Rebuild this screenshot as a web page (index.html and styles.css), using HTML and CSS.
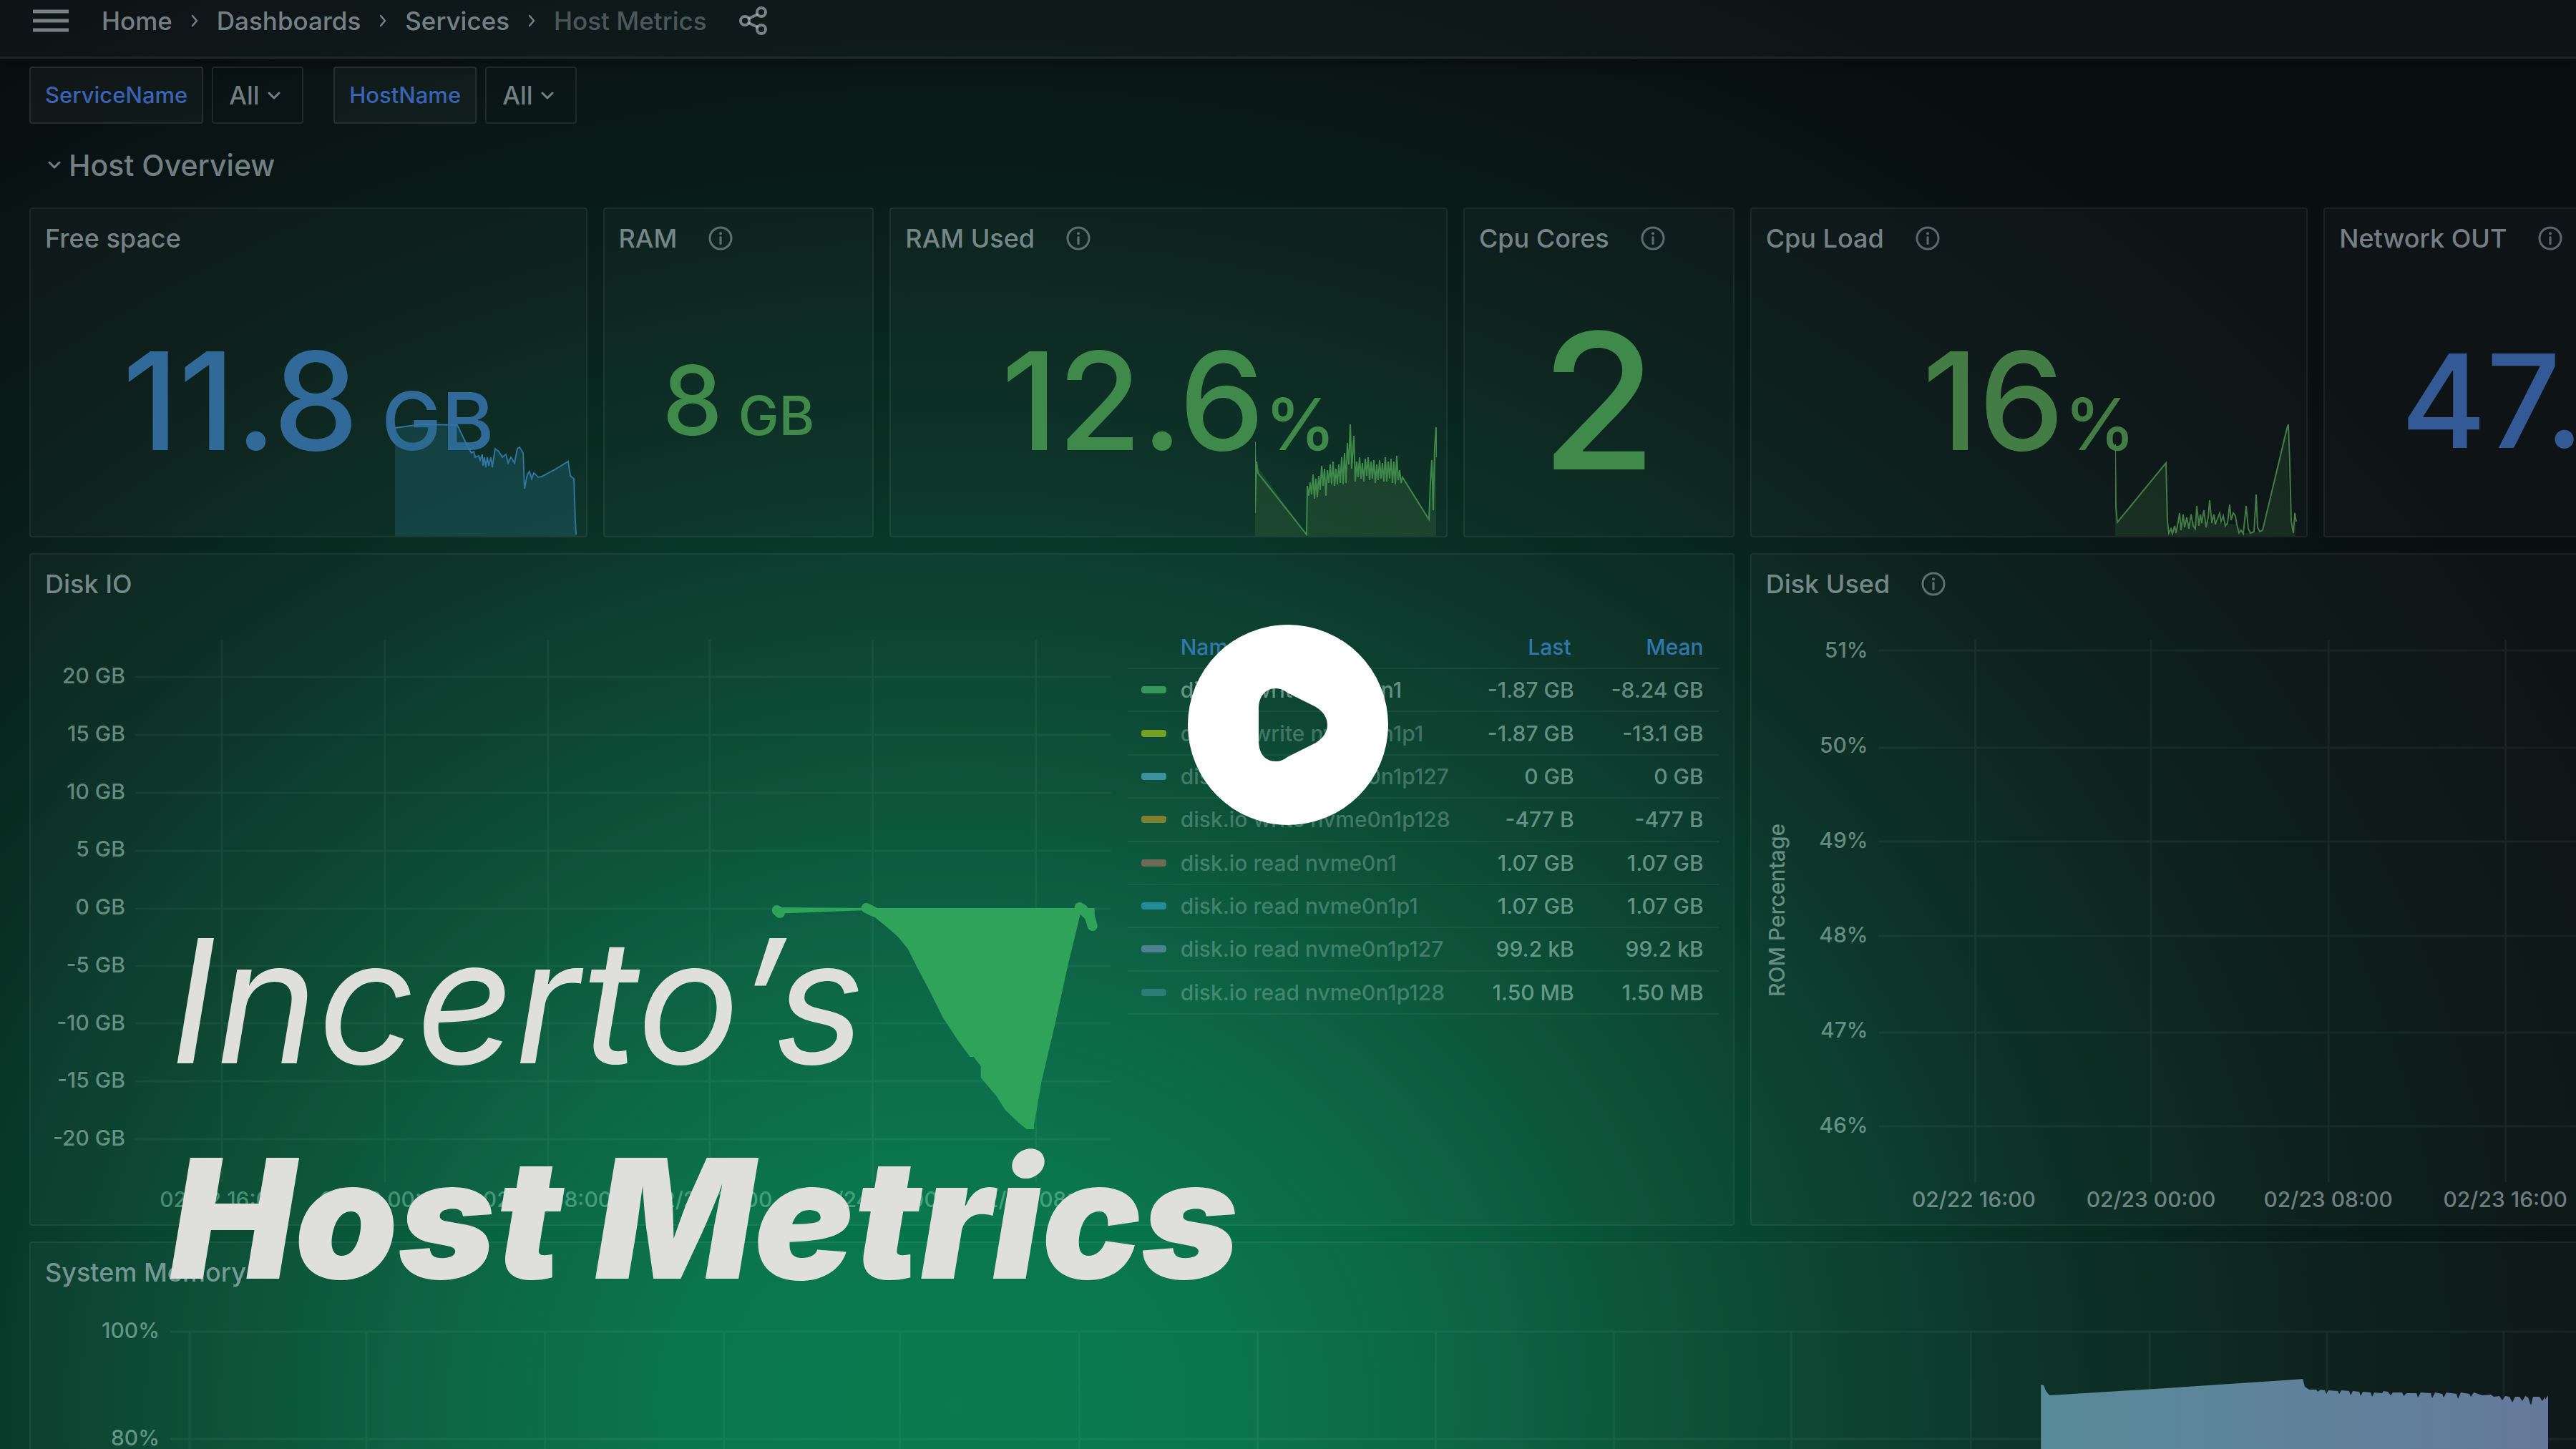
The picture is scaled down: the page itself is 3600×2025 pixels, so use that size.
FILE: index.html
```html
<!DOCTYPE html>
<html lang="en">
<head>
<meta charset="utf-8">
<title>Host Metrics</title>
<link rel="stylesheet" href="styles.css">
</head>
<body>
<svg width="0" height="0" class="defs" aria-hidden="true">
  <symbol id="info" viewBox="0 0 34 34"><circle cx="17" cy="17" r="15" fill="none" stroke="currentColor" stroke-width="3"/><path d="M17 15.500v9" stroke="currentColor" stroke-width="3.200" stroke-linecap="round"/><circle cx="17" cy="10.300" r="2" fill="currentColor"/></symbol>
  <symbol id="down" viewBox="0 0 18 12"><path d="M2 2l7 7 7-7" fill="none" stroke="currentColor" stroke-width="3" stroke-linecap="round" stroke-linejoin="round"/></symbol>
  <symbol id="next" viewBox="0 0 12 20"><path d="M3 3l6 7-6 7" fill="none" stroke="currentColor" stroke-width="2.500" stroke-linecap="round" stroke-linejoin="round"/></symbol>
</svg>

<header class="topbar">
  <button class="icon-button menu" aria-label="Menu"><svg viewBox="0 0 50 32"><path d="M0 3h50M0 16h50M0 29h50" stroke="currentColor" stroke-width="5"/></svg></button>
  <nav class="crumbs">
    <a href="#">Home</a><svg><use href="#next"/></svg>
    <a href="#">Dashboards</a><svg><use href="#next"/></svg>
    <a href="#">Services</a><svg><use href="#next"/></svg>
    <span class="current">Host Metrics</span>
  </nav>
  <button class="icon-button share" aria-label="Share"><svg viewBox="0 0 40 40" fill="none" stroke="currentColor" stroke-width="4"><circle cx="8" cy="20" r="6"/><circle cx="31" cy="8" r="6"/><circle cx="31" cy="32" r="6"/><path d="M13 17l13-6M13 23l13 6"/></svg></button>
</header>

<main>
  <div class="variables">
    <div class="variable">
      <label for="service">ServiceName</label>
      <span class="picker"><select id="service"><option>All</option></select><svg><use href="#down"/></svg></span>
    </div>
    <div class="variable">
      <label for="host">HostName</label>
      <span class="picker"><select id="host"><option>All</option></select><svg><use href="#down"/></svg></span>
    </div>
  </div>

  <h2 class="row-title"><svg><use href="#down"/></svg>Host Overview</h2>

  <div class="dashboard">
    <section class="panel stat span-2 blue">
      <h3>Free space</h3>
      <p class="value">11.8<span class="unit spaced">GB</span></p>
      <svg class="spark" viewBox="0 0 254 160">
        <path class="fill" d="M0 9L22 6 38 4 87 5 103 38 107 42 112 46 119 50 123 58 137 60 140 38 150 46 158 52 167 56 171 38 177 42 181 94 185 74 191 72 197 78 205 77 222 68 242 56 246 76 250 80 252 140 254 160H0z"/>
        <path class="line" d="M0 9L22 6 38 4 87 5 103 38 107 44 110 42 112 50 117 48 119 54 122 46 123 62 125 50 127 64 129 50 131 62 134 50 136 64 140 38 145 42 150 50 155 46 158 58 162 50 167 58 171 38 174 36 179 44 181 94 185 74 188 70 191 80 194 72 200 78 205 77 222 68 242 56 245 76 250 80 252 140 253 158"/>
      </svg>
    </section>
    <section class="panel stat green">
      <h3>RAM <svg><use href="#info"/></svg></h3>
      <p class="value small">8<span class="unit spaced">GB</span></p>
    </section>
    <section class="panel stat span-2 green">
      <h3>RAM Used <svg><use href="#info"/></svg></h3>
      <p class="value">12.6<span class="unit percent">%</span></p>
      <svg class="spark" viewBox="0 0 254 160">
        <path class="fill" d="M0 28L4 64 72 158 73 96 90 84 120 80 130 50 140 70 200 70 243 137 250 60 253 10V160H0z"/>
        <path class="line" d="M0 28V128L2 56 4 72 72 158 73 90 75 104 77 85 79 102 81 74 83 108 85 80 87 106 89 76 91 96 93 62 95 90 97 66 99 104 101 68 103 86 105 60 107 88 109 56 111 90 113 66 115 88 117 60 119 86 121 50 123 88 125 44 127 86 129 30 131 60 133 4 135 66 138 20 140 84 142 56 144 78 146 50 148 80 150 58 152 84 154 52 156 76 158 50 160 82 162 56 164 80 166 54 168 86 170 60 172 82 174 54 176 80 178 58 180 84 182 50 184 84 186 56 188 80 190 52 192 86 194 56 196 88 198 48 200 82 202 68 204 86 206 78 243 137 245 86 247 54 249 124 251 36 253 8 254 50"/>
      </svg>
    </section>
    <section class="panel stat green">
      <h3>Cpu Cores <svg><use href="#info"/></svg></h3>
      <p class="value large">2</p>
    </section>
    <section class="panel stat span-2 deep-green">
      <h3>Cpu Load <svg><use href="#info"/></svg></h3>
      <p class="value">16<span class="unit percent">%</span></p>
      <svg class="spark" viewBox="0 0 254 160">
        <path class="fill" d="M0 32L3 141 71 58 74 154 100 140 130 140 170 144 180 156 205 154 240 4 245 150 252 140V160H0z"/>
        <path class="line" d="M0 32L1 120 3 141 71 58 73 140 75 156 78 150 80 157 83 146 85 156 88 140 90 128 92 152 95 130 97 148 100 134 103 150 106 130 109 146 112 150 114 118 117 146 119 130 121 142 124 124 127 148 130 134 132 110 135 142 138 130 140 144 143 136 146 128 148 140 151 132 154 146 157 142 160 116 162 138 165 128 168 132 170 144 173 156 176 152 179 157 183 118 186 150 189 156 194 154 197 102 199 148 202 154 206 152 240 10 242 4 244 60 246 140 249 156 251 128 253 140"/>
      </svg>
    </section>
    <section class="panel stat start indigo">
      <h3>Network OUT <svg><use href="#info"/></svg></h3>
      <p class="value">47.</p>
    </section>

    <section class="panel wide-6">
      <h3>Disk IO</h3>
      <div class="panel-body disk-io">
        <div class="chart">
          <div class="y-axis"><span>20 GB</span><span>15 GB</span><span>10 GB</span><span>5 GB</span><span>0 GB</span><span>-5 GB</span><span>-10 GB</span><span>-15 GB</span><span>-20 GB</span></div>
          <svg class="plot" viewBox="0 0 1364 758" preserveAspectRatio="none">
            <path class="grid" d="M0 52H1364M0 133H1364M0 214H1364M0 295H1364M0 376H1364M0 456H1364M0 536H1364M0 617H1364M0 698H1364M121 0V758M349 0V758M577 0V758M803 0V758M1031 0V758M1259 0V758"/>
            <path class="io" d="M892 374L1023 375V378L892 383z"/>
            <path class="io" d="M1020 375H1341V404L1334 396 1321 384 1304 454 1286 536 1267 617 1256 680 1257 684H1246L1236 676 1216 657 1204 638 1182 612V596L1172 583H1167L1150 560 1129 528 1109 488 1092 456 1080 432 1066 415 1050 401 1034 388 1020 380z"/>
            <path class="io-line" d="M897 378L901 382M1022 375L1032 380M1320 374L1325 377M1334 386L1338 400"/>
          </svg>
          <div class="x-axis"><span>02/22 16:00</span><span>02/23 00:00</span><span>02/23 08:00</span><span>02/23 16:00</span><span>02/24 00:00</span><span>02/24 08:00</span></div>
        </div>
        <table class="legend">
          <thead><tr><th></th><th class="name">Name</th><th>Last</th><th>Mean</th></tr></thead>
          <tbody>
            <tr class="active"><td><i class="swatch s1"></i></td><td class="name">disk.io write nvme0n1</td><td>-1.87 GB</td><td>-8.24 GB</td></tr>
            <tr><td><i class="swatch s2"></i></td><td class="name">disk.io write nvme0n1p1</td><td>-1.87 GB</td><td>-13.1 GB</td></tr>
            <tr><td><i class="swatch s3"></i></td><td class="name">disk.io write nvme0n1p127</td><td>0 GB</td><td>0 GB</td></tr>
            <tr><td><i class="swatch s4"></i></td><td class="name">disk.io write nvme0n1p128</td><td>-477 B</td><td>-477 B</td></tr>
            <tr><td><i class="swatch s5"></i></td><td class="name">disk.io read nvme0n1</td><td>1.07 GB</td><td>1.07 GB</td></tr>
            <tr><td><i class="swatch s6"></i></td><td class="name">disk.io read nvme0n1p1</td><td>1.07 GB</td><td>1.07 GB</td></tr>
            <tr><td><i class="swatch s7"></i></td><td class="name">disk.io read nvme0n1p127</td><td>99.2 kB</td><td>99.2 kB</td></tr>
            <tr><td><i class="swatch s8"></i></td><td class="name">disk.io read nvme0n1p128</td><td>1.50 MB</td><td>1.50 MB</td></tr>
          </tbody>
        </table>
      </div>
    </section>

    <section class="panel wide-3">
      <h3>Disk Used <svg><use href="#info"/></svg></h3>
      <div class="panel-body disk-used">
        <div class="axis-title">ROM Percentage</div>
        <div class="chart">
          <div class="y-axis"><span>51%</span><span>50%</span><span>49%</span><span>48%</span><span>47%</span><span>46%</span></div>
          <svg class="plot" viewBox="0 0 992 758" preserveAspectRatio="none">
            <path class="grid" d="M0 15H992M0 151H992M0 282H992M0 414H992M0 549H992M0 680H992M136 0V758M382 0V758M631 0V758M879 0V758"/>
          </svg>
          <div class="x-axis"><span>02/22 16:00</span><span>02/23 00:00</span><span>02/23 08:00</span><span>02/23 16:00</span></div>
        </div>
      </div>
    </section>

    <section class="panel wide-9">
      <h3>System Memory</h3>
      <div class="panel-body memory">
        <div class="chart">
          <div class="y-axis"><span>100%</span><span>80%</span></div>
          <svg class="plot" viewBox="0 0 3379 240" preserveAspectRatio="none">
            <defs><linearGradient id="mem" x1="0" x2="1" y1="0" y2="0"><stop offset="0" stop-color="#578b98"/><stop offset="1" stop-color="#66799c"/></linearGradient></defs>
            <path class="grid" d="M0 1H3379M0 151H3379M27 0V240M274 0V240M524 0V240M774 0V240M1020 0V240M1271 0V240M1520 0V240M1769 0V240M2018 0V240M2266 0V240M2517 0V240M2767 0V240M3015 0V240M3262 0V240"/>
            <path fill="url(#mem)" d="M2615 240V75L2619 76 2622 84 2627 90 2790 80 2970 68 2981 67 2984 78 2990 82 3000 82 3002 85 3006 82 3012 83 3014 88 3017 83 3030 84 3032 88 3035 83 3046 84 3048 90 3051 84 3060 85 3062 91 3065 85 3076 86 3078 92 3081 86 3092 87 3094 84 3100 85 3104 90 3107 86 3120 86 3122 91 3126 87 3140 87 3142 93 3146 86 3160 87 3162 94 3166 86 3176 88 3178 93 3182 86 3196 88 3198 95 3202 86 3214 88 3216 92 3220 86 3232 90 3244 89 3248 92 3256 91 3260 97 3264 91 3270 92 3274 100 3278 92 3284 92 3288 98 3292 91 3296 93 3300 104 3303 92 3312 92 3316 98 3320 92V96L3324 90V240z"/>
          </svg>
        </div>
      </div>
    </section>
  </div>
</main>

<div class="caption"><p class="brand">Incerto’s</p><h1>Host Metrics</h1></div>
<button class="play" aria-label="Play video"><svg viewBox="0 0 280 280"><path fill="#fff" fill-rule="evenodd" d="M140 0a140 140 0 1 0 0 280a140 140 0 1 0 0-280zM99 118C99 100 108 89 123 89C129 89 134 91 139 95L179 115C190 122 195 131 195 140C195 149 190 158 179 165L139 185C134 189 129 191 123 191C108 191 99 180 99 162z"/></svg></button>
</body>
</html>
```
FILE: styles.css
```css
* { box-sizing: border-box; margin: 0; padding: 0; }

body {
  position: relative;
  height: 100vh;
  overflow: hidden;
  font-family: Inter, "Liberation Sans", sans-serif;
  font-size: 30px;
  font-weight: 500;
  line-height: 36px;
  color: rgba(208, 222, 228, .54);
  background: radial-gradient(ellipse 70% 109% at 37% 97%,
    #04784b 0, #06724a 16%, #086041 30%, #085037 39%, #083f2d 50%,
    #082b20 64%, #091a17 80%, #090f11 100%);
}

.defs { position: absolute; }
button { border: 0; background: none; color: inherit; font: inherit; }
a { color: inherit; text-decoration: none; }
svg { display: block; flex: none; }

.topbar {
  display: flex;
  align-items: center;
  height: 82px;
  padding: 0 46px 22px;
  border-bottom: 3px solid rgba(255, 255, 255, .07);
  background: rgba(255, 255, 255, .025);
  box-shadow: 0 4px 16px rgba(0, 0, 0, .4);
  font-size: 35px;
}
.menu svg { width: 50px; height: 32px; }
.crumbs { display: flex; align-items: center; margin: 0 45px 0 46px; gap: 25px; }
.crumbs svg { width: 12px; height: 20px; }
.current { opacity: .6; }
.share svg { width: 40px; height: 40px; }

main { padding: 11px 0 0 41px; }

.variables { display: flex; gap: 42px; }
.variable { display: flex; gap: 12px; }
.variable label, .picker {
  height: 80px;
  border: 2px solid rgba(255, 255, 255, .09);
  border-radius: 4px;
}
.variable label {
  padding: 20px;
  background: rgba(255, 255, 255, .03);
  font-size: 31px;
  color: #3b63b4;
}
.picker { position: relative; }
.picker select {
  width: 124px;
  height: 76px;
  padding-left: 22px;
  border: 0;
  appearance: none;
  background: none;
  color: inherit;
  font: inherit;
  font-size: 35px;
}
.picker svg { position: absolute; right: 30px; top: 33px; width: 18px; height: 12px; pointer-events: none; }

.row-title {
  display: flex;
  align-items: center;
  gap: 11px;
  height: 117px;
  padding: 0 0 2px 26px;
  font-size: 41px;
  font-weight: 500;
}
.row-title svg { width: 18px; height: 12px; }

.dashboard {
  display: grid;
  grid-template-columns: repeat(9, minmax(0, 1fr));
  gap: 22px;
  margin-right: -26px;
}
.panel {
  position: relative;
  border: 2px solid rgba(255, 255, 255, .06);
  border-radius: 4px;
  background: rgba(255, 255, 255, .025);
}
.span-2 { grid-column: span 2; }
.wide-6 { grid-column: span 6; }
.wide-3 { grid-column: span 3; }
.wide-9 { grid-column: span 9; }

.panel h3 {
  display: flex;
  align-items: center;
  gap: 44px;
  height: 82px;
  padding-left: 20px;
  font-size: 36px;
  font-weight: 500;
  white-space: nowrap;
}
.panel h3 svg { width: 34px; height: 34px; opacity: .75; }

.stat { display: flex; flex-direction: column; height: 461px; }
.value {
  display: flex;
  flex: 1;
  align-items: baseline;
  justify-content: center;
  padding-top: 92px;
  font-size: 190px;
  line-height: 188px;
}
.unit { font-size: 112px; line-height: 112px; }
.percent { font-size: 100px; }
.spaced { margin-left: 32px; }
.small { padding-top: 118px; font-size: 134px; line-height: 134px; }
.small .unit { font-size: 76px; line-height: 76px; }
.small .spaced { margin-left: 22px; }
.large { padding-top: 54px; font-size: 264px; line-height: 264px; }
.start .value { justify-content: flex-start; padding-left: 106px; font-size: 182px; }

.blue .value { color: #316a98; }
.green .value { color: #3f894b; }
.deep-green .value { color: #437d45; }
.indigo .value { color: #335a95; }

.spark { position: absolute; right: 13px; bottom: 0; width: 254px; height: 160px; }
.spark .line { fill: none; stroke-width: 2px; }
.blue .line { stroke: #2f759f; }
.blue .fill { fill: rgba(35, 105, 130, .33); }
.green .line { stroke: #3f894b; }
.green .fill { fill: rgba(60, 110, 60, .3); }
.deep-green .line { stroke: #437d45; }
.deep-green .fill { fill: rgba(67, 125, 69, .2); }

.panel-body { display: flex; color: rgba(178, 218, 206, .54); }
.chart {
  display: grid;
  flex: 1;
  grid-template-columns: 132px minmax(0, 1fr);
  grid-template-rows: 758px 36px;
  column-gap: 14px;
  row-gap: 6px;
}
.y-axis { display: flex; flex-direction: column; justify-content: space-between; text-align: right; }
.plot { width: 100%; height: 100%; overflow: visible; }
.grid { fill: none; stroke: rgba(215, 255, 235, .05); stroke-width: 3px; vector-effect: non-scaling-stroke; }
.x-axis { display: grid; grid-column: 2; grid-auto-flow: column; grid-auto-columns: 1fr; text-align: center; white-space: nowrap; }

.disk-io { gap: 23px; padding: 37px 20px 17px 0; }
.disk-io .y-axis { padding: 32px 0 44px; }
.disk-io .x-axis { margin: 0 -9px 0 7px; color: rgba(120, 200, 165, .55); }
.io { fill: #30a35b; }
.io-line { fill: none; stroke: #30a35b; stroke-width: 14px; stroke-linecap: round; }

.legend { width: 826px; height: 544px; margin-top: -20px; border-collapse: collapse; table-layout: fixed; }
.legend tr { height: 60px; border-bottom: 2px solid rgba(215, 255, 235, .06); }
.legend th { color: #3277ad; font-weight: 500; text-align: right; }
.legend td { text-align: right; font-weight: 500; }
.legend th:first-child { width: 74px; }
.legend th:nth-child(3) { width: 158px; }
.legend th:nth-child(4) { width: 200px; }
.legend th:nth-child(n+3) { padding-right: 6px; }
.legend td:nth-child(3) { padding-right: 2px; }
.legend th:last-child, .legend td:last-child { padding-right: 21px; }
.legend .name { text-align: left; white-space: nowrap; font-weight: 500; }
.legend td.name { opacity: .6; }
.legend .active .name { opacity: 1; }
.swatch { display: block; width: 35px; height: 10px; margin-left: 19px; border-radius: 4px; }
.s1 { background: #35985a; }
.s2 { background: #74a024; }
.s3 { background: #3c929c; }
.s4 { background: #7e8030; }
.s5 { background: #6f6a54; }
.s6 { background: #228d98; }
.s7 { background: #4d8290; }
.s8 { background: #2b7d75; }

.disk-used { padding: 37px 10px 17px 15px; }
.axis-title { width: 40px; margin-bottom: 44px; writing-mode: vertical-rl; transform: rotate(180deg); text-align: center; line-height: 40px; }
.disk-used .chart { grid-template-columns: 108px minmax(0, 1fr); column-gap: 14px; }
.disk-used .y-axis { margin: -4px 0 0; padding-bottom: 62px; }
.disk-used .x-axis { margin: 0 -11px 0 10px; color: rgba(208, 222, 228, .5); }

.memory { padding: 41px 8px 0 0; }
.memory .chart { grid-template-columns: 180px minmax(0, 1fr); grid-template-rows: 240px; column-gap: 15px; }
.memory .y-axis { margin-top: -19px; padding-bottom: 73px; }

.caption {
  position: absolute;
  left: 6.6%;
  top: calc(50% + 234px);
  color: #dfdfde;
  font-style: italic;
  line-height: 304px;
  white-space: nowrap;
}
.brand { font-size: 240px; font-weight: 400; }
.caption h1 { font-size: 232px; font-weight: 900; }

.play { position: absolute; left: 50%; top: 50%; transform: translate(-50%, -50%); }
.play svg { width: 280px; height: 280px; }
```
